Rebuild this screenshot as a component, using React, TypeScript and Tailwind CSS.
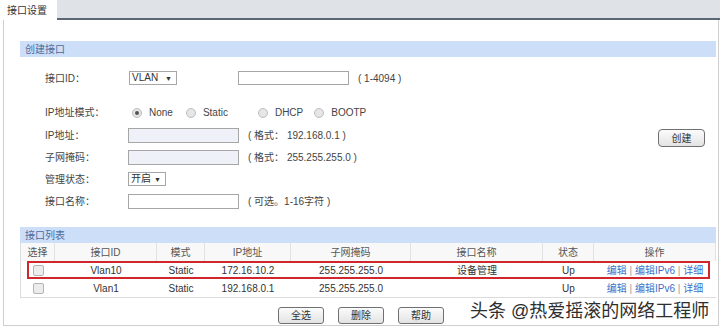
import React from "react";

const font = "font-['Liberation_Sans','Noto_Sans_CJK_SC',sans-serif]";

const Radio = ({ checked = false }: { checked?: boolean }) => (
  <span className="flex h-[10px] w-[10px] items-center justify-center rounded-full border border-[#bcbcbc] bg-[#e6e6e6]">
    {checked && <span className="h-[4px] w-[4px] rounded-full bg-[#555]" />}
  </span>
);

const Check = () => (
  <span className="block h-[11px] w-[11px] rounded-[2px] border border-[#b4b4b4] bg-[#ececec]" />
);

const Select = ({ value, width }: { value: string; width: string }) => (
  <div
    className={`flex h-[14px] items-center justify-between border border-[#a6a6a6] bg-white pl-[2px] pr-[4px] text-[10px] leading-none text-[#333] ${width}`}
  >
    <span>{value}</span>
    <span className="text-[7px]">▼</span>
  </div>
);

const Btn = ({ label, className = "" }: { label: string; className?: string }) => (
  <div
    className={`flex h-[17px] w-[46px] items-center justify-center rounded-[3px] border border-[#707070] bg-gradient-to-b from-[#fbfbfb] to-[#e3e3e3] text-[10px] text-[#333] ${className}`}
  >
    {label}
  </div>
);

const FormRow = ({
  label,
  children,
  className = "h-[22px]",
}: {
  label: string;
  children: React.ReactNode;
  className?: string;
}) => (
  <div className={`flex items-center ${className}`}>
    <div className="w-[108px] pl-[25px] text-[#444]">{label}</div>
    {children}
  </div>
);

const cols = ["w-[34px]", "w-[102px]", "w-[48px]", "w-[86px]", "w-[120px]", "w-[132px]", "w-[51px]", "w-[122px]"];
const headers = ["选择", "接口ID", "模式", "IP地址", "子网掩码", "接口名称", "状态", "操作"];

const rows = [
  { id: "Vlan10", mode: "Static", ip: "172.16.10.2", mask: "255.255.255.0", name: "设备管理", state: "Up" },
  { id: "Vlan1", mode: "Static", ip: "192.168.0.1", mask: "255.255.255.0", name: "", state: "Up" },
];

const Links = () => (
  <span className="text-[#3d6fc6]">
    编辑 <span className="text-[#999]">|</span> 编辑IPv6 <span className="text-[#999]">|</span> 详细
  </span>
);

export default function App() {
  return (
    <div className={`relative h-[327px] w-[720px] overflow-hidden bg-white text-[10px] text-[#333] ${font}`}>
      {/* tab bar */}
      <div className="flex h-[20px]">
        <div className="flex w-[57px] items-center bg-white pl-[7px] text-[10px] text-[#333]">接口设置</div>
        <div className="flex-1 border-b-2 border-[#5d6674] bg-[#dfe3e8]" />
      </div>

      <div className="ml-[3px] h-[306px] w-[716px] border-x border-b border-[#cfcfcf] pl-[16px] pr-[2px] pt-[21px]">
        {/* create section */}
        <div className="flex h-[16px] items-center bg-[#cddff8] pl-[5px] text-[#4d6b9c]">创建接口</div>
        <div className="flex flex-col pt-[10px]">
          <FormRow label="接口ID：">
            <div className="ml-[1px] flex items-center">
              <Select value="VLAN" width="w-[48px]" />
              <div className="ml-[61px] h-[14px] w-[111px] border border-[#a6a6a6] bg-white" />
              <span className="ml-[9px] text-[#444]">( 1-4094 )</span>
            </div>
          </FormRow>
          <FormRow label="IP地址模式：" className="mt-[12px] h-[23px]">
            <div className="ml-[4px] flex items-center gap-[7px] text-[#444]">
              <Radio checked />
              <span>None</span>
              <span className="ml-[6px]">
                <Radio />
              </span>
              <span>Static</span>
              <span className="ml-[23px]">
                <Radio />
              </span>
              <span>DHCP</span>
              <span className="ml-[4px]">
                <Radio />
              </span>
              <span>BOOTP</span>
            </div>
          </FormRow>
          <FormRow label="IP地址：">
            <div className="h-[15px] w-[111px] border border-[#a6a6a6] bg-[#eef1f7]" />
            <span className="ml-[9px] text-[#444]">( 格式： 192.168.0.1 )</span>
            <Btn label="创建" className="ml-auto mr-[11px] h-[18px] w-[47px] self-start mt-[5px] rounded-[4px]" />
          </FormRow>
          <FormRow label="子网掩码：">
            <div className="h-[15px] w-[111px] border border-[#a6a6a6] bg-[#eef1f7]" />
            <span className="ml-[9px] text-[#444]">( 格式： 255.255.255.0 )</span>
          </FormRow>
          <FormRow label="管理状态：">
            <Select value="开启" width="w-[38px]" />
          </FormRow>
          <FormRow label="接口名称：">
            <div className="h-[15px] w-[111px] border border-[#a6a6a6] bg-white" />
            <span className="ml-[9px] text-[#444]">( 可选。1-16字符 )</span>
          </FormRow>
        </div>

        {/* list section */}
        <div className="mt-[15px] flex h-[16px] items-center bg-[#cddff8] pl-[5px] text-[#4d6b9c]">接口列表</div>
        <div className="relative border-b border-l border-[#dcdcdc]">
          <div className="flex h-[18px] bg-[#f8f8f8] text-[#555]">
            {headers.map((h, i) => (
              <div
                key={h}
                className={`flex items-center justify-center border-r border-[#e2e2e2] ${cols[i]}`}
              >
                {h}
              </div>
            ))}
          </div>
          {rows.map((r) => (
            <div key={r.id} className="flex h-[18px] items-center text-[#333]">
              <div className={`flex justify-center ${cols[0]}`}>
                <Check />
              </div>
              <div className={`text-center ${cols[1]}`}>{r.id}</div>
              <div className={`text-center ${cols[2]}`}>{r.mode}</div>
              <div className={`text-center ${cols[3]}`}>{r.ip}</div>
              <div className={`text-center ${cols[4]}`}>{r.mask}</div>
              <div className={`text-center ${cols[5]}`}>{r.name}</div>
              <div className={`text-center ${cols[6]}`}>{r.state}</div>
              <div className={`text-center ${cols[7]}`}>
                <Links />
              </div>
            </div>
          ))}
          {/* annotation box */}
          <div className="absolute left-[6px] right-[6px] top-[18px] h-[18px] border-2 border-[#d0262c]" />
        </div>

        <div className="mt-[9px] flex gap-[14px] pl-[258px]">
          <Btn label="全选" />
          <Btn label="删除" />
          <Btn label="帮助" />
        </div>
      </div>

      {/* watermark */}
      <div className="absolute left-[470px] top-[299px] text-[18px] leading-[24px] text-[#2e2e2e] [text-shadow:0_0_2px_#fff]">
        头条 @热爱摇滚的网络工程师
      </div>
    </div>
  );
}
